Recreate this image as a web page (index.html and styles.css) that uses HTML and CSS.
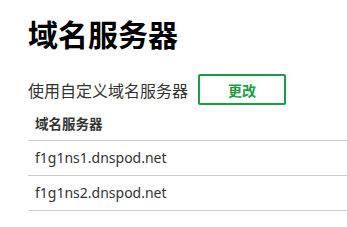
FILE: index.html
```html
<!doctype html>
<html lang="zh-CN">
<head>
	<meta charset="UTF-8">
	<title>域名服务器</title>
	<link rel="stylesheet" href="styles.css">
</head>
<body>
	<div class="dns-page">
		<h1 class="title">域名服务器</h1>
		<div class="custom">
			<span class="custom-label">使用自定义域名服务器</span>
			<button class="btn-change">更改</button>
		</div>
		<div class="ns-list">
			<div class="ns-head">域名服务器</div>
			<div class="ns-row">f1g1ns1.dnspod.net</div>
			<div class="ns-row">f1g1ns2.dnspod.net</div>
		</div>
	</div>
</body>
</html>
```
FILE: styles.css
```css
* {
	margin: 0;
	padding: 0;
	box-sizing: border-box;
}
body {
	background: #fff;
	font-family: "Noto Sans", "Noto Sans CJK SC", sans-serif;
	color: #333;
}

.dns-page {
	padding: 16px 0 0 28px;
}
.title {
	font-size: 30px;
	font-weight: bold;
	line-height: 38px;
	color: #000;
}

.custom {
	display: flex;
	align-items: center;
	margin-top: 20px;
}
.custom-label {
	font-size: 16px;
	color: #333;
}
.btn-change {
	width: 88px;
	height: 31px;
	margin-left: 10px;
	border: 2px solid #1a9e45;
	border-radius: 2px;
	background: #fff;
	color: #1a9e45;
	font-family: "Noto Sans CJK SC", sans-serif;
	font-size: 14px;
	font-weight: bold;
}

.ns-head {
	height: 36px;
	padding: 2px 0 0 7px;
	line-height: 34px;
	font-size: 13.5px;
	font-weight: bold;
	border-bottom: 1px solid #ccc;
}
.ns-row {
	height: 35px;
	padding-left: 7px;
	line-height: 34px;
	font-size: 14px;
	border-bottom: 1px solid #ccc;
}
```
